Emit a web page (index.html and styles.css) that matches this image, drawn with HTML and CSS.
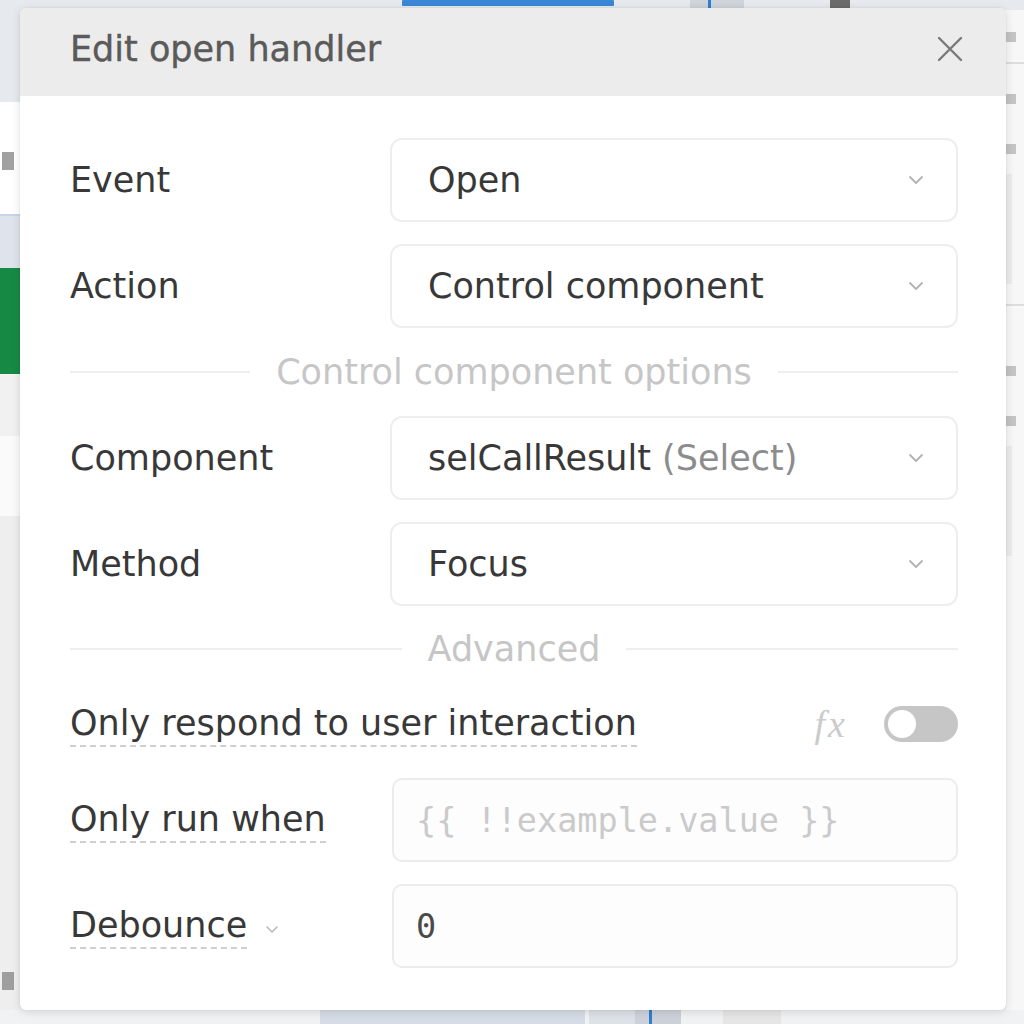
FILE: index.html
```html
<!DOCTYPE html>
<html lang="en">
<head>
<meta charset="utf-8">
<title>Edit open handler</title>
<link rel="stylesheet" href="styles.css">
</head>
<body>
<div class="app">
  <div class="topstrip">
    <span class="ts-link"></span>
    <span class="ts-gray"><i></i></span>
    <span class="ts-dark"></span>
  </div>
  <div class="middle">
    <div class="leftstrip">
      <div class="ls-a"></div>
      <div class="ls-b"><span class="frag"></span></div>
      <div class="ls-c"></div>
      <div class="ls-green"></div>
      <div class="ls-d"></div>
      <div class="ls-e"></div>
      <div class="ls-f"><span class="frag frag-low"></span></div>
    </div>
    <div class="center"></div>
    <div class="rightstrip">
      <span class="rs-mark m1"></span>
      <span class="rs-line"></span>
      <span class="rs-mark m2"></span>
      <span class="rs-mark m3"></span>
      <span class="rs-box"></span>
      <span class="rs-line"></span>
      <span class="rs-mark m4"></span>
      <span class="rs-mark m5"></span>
      <span class="rs-box"></span>
    </div>
  </div>
  <div class="bottomstrip">
    <span class="bs-a"></span>
    <span class="bs-b"></span>
    <span class="bs-c"><i></i></span>
    <span class="bs-d"></span>
  </div>
</div>

<div class="modal">
  <div class="modal-header">
    <h1 class="modal-title">Edit open handler</h1>
    <svg class="close" width="28" height="28" viewBox="0 0 28 28" aria-hidden="true">
      <path d="M3 3 L25 25 M25 3 L3 25" stroke="#7a7a7a" stroke-width="2.4" stroke-linecap="round" fill="none"/>
    </svg>
  </div>
  <div class="modal-body">
    <div class="row">
      <div class="label">Event</div>
      <div class="select"><span class="value">Open</span><svg class="chev" width="16" height="10" viewBox="0 0 16 10"><path d="M2 2 L8 8 L14 2" stroke="#b3b3b3" stroke-width="1.8" fill="none" stroke-linecap="round" stroke-linejoin="round"/></svg></div>
    </div>
    <div class="row">
      <div class="label">Action</div>
      <div class="select"><span class="value">Control component</span><svg class="chev" width="16" height="10" viewBox="0 0 16 10"><path d="M2 2 L8 8 L14 2" stroke="#b3b3b3" stroke-width="1.8" fill="none" stroke-linecap="round" stroke-linejoin="round"/></svg></div>
    </div>
    <div class="divider divider-options"><span>Control component options</span></div>
    <div class="row">
      <div class="label">Component</div>
      <div class="select"><span class="value">selCallResult <span class="muted">(Select)</span></span><svg class="chev" width="16" height="10" viewBox="0 0 16 10"><path d="M2 2 L8 8 L14 2" stroke="#b3b3b3" stroke-width="1.8" fill="none" stroke-linecap="round" stroke-linejoin="round"/></svg></div>
    </div>
    <div class="row">
      <div class="label">Method</div>
      <div class="select"><span class="value">Focus</span><svg class="chev" width="16" height="10" viewBox="0 0 16 10"><path d="M2 2 L8 8 L14 2" stroke="#b3b3b3" stroke-width="1.8" fill="none" stroke-linecap="round" stroke-linejoin="round"/></svg></div>
    </div>
    <div class="divider divider-advanced"><span>Advanced</span></div>
    <div class="toggle-row">
      <div class="label"><span class="dashed">Only respond to user interaction</span></div>
      <div class="toggle-ctrl">
        <span class="fx">fx</span>
        <span class="switch"><span class="knob"></span></span>
      </div>
    </div>
    <div class="row row-input">
      <div class="label"><span class="dashed">Only run when</span></div>
      <div class="input"><span class="mono placeholder">{{ !!example.value }}</span></div>
    </div>
    <div class="row row-input">
      <div class="label"><span class="dashed">Debounce</span><svg class="chev-small" width="14" height="9" viewBox="0 0 14 9"><path d="M2 2 L7 7 L12 2" stroke="#b8b8b8" stroke-width="1.6" fill="none" stroke-linecap="round" stroke-linejoin="round"/></svg></div>
      <div class="input"><span class="mono">0</span></div>
    </div>
  </div>
</div>
</body>
</html>
```
FILE: styles.css
```css
* { box-sizing: border-box; }
html, body { margin: 0; padding: 0; }
body {
  width: 1024px;
  height: 1024px;
  overflow: hidden;
  position: relative;
  font-family: "DejaVu Sans", Inter, sans-serif;
  background: #f4f5f7;
}

/* ---------- background app ---------- */
.app {
  width: 1024px;
  height: 1024px;
  display: flex;
  flex-direction: column;
}
.topstrip {
  height: 10px;
  display: flex;
  align-items: flex-start;
  background: #e6e9ee;
  flex: none;
}
.ts-link { margin-left: 402px; width: 212px; height: 6px; background: #3b86d6; border-radius: 1px; }
.ts-gray { margin-left: 76px; width: 54px; height: 8px; background: #cfd3da; position: relative; }
.ts-gray i { position: absolute; left: 18px; top: 0; width: 3px; height: 8px; background: #2f7fd0; }
.ts-dark { margin-left: 86px; width: 20px; height: 8px; background: #6b6b6b; }

.middle { flex: 1; display: flex; }
.leftstrip { width: 22px; display: flex; flex-direction: column; }
.ls-a { height: 92px; background: #e6e9ee; }
.ls-b { height: 114px; background: #ffffff; border-bottom: 2px solid #c7d6ec; position: relative; }
.frag { position: absolute; left: 2px; top: 50px; width: 12px; height: 18px; background: #8a8a8a; opacity: .8; }
.frag-low { top: auto; bottom: 20px; }
.ls-c { height: 52px; background: #dfe4ec; }
.ls-green { height: 106px; background: #168a44; }
.ls-d { height: 62px; background: #f1f1f1; }
.ls-e { height: 80px; background: #fafafa; }
.ls-f { flex: 1; background: #eeeeee; position: relative; }
.center { flex: 1; background: #eef0f3; }
.rightstrip {
  width: 18px;
  background: #f7f7f7;
  display: flex;
  flex-direction: column;
  align-items: flex-start;
  padding-top: 22px;
  gap: 20px;
}
.rs-mark { width: 10px; height: 10px; background: #c4c4c4; }
.rs-line { width: 18px; height: 2px; background: #dddddd; }
.rs-box { width: 6px; height: 110px; background: #ececec; }
.m2 { margin-top: 10px; }
.m3 { margin-top: 20px; }
.m4 { margin-top: 40px; }
.m5 { margin-top: 20px; }

.bottomstrip {
  height: 14px;
  display: flex;
  background: #f1f2f4;
  flex: none;
}
.bs-a { margin-left: 320px; width: 265px; background: #d6dce6; }
.bs-b { margin-left: 4px; width: 46px; background: #dde1e8; }
.bs-c { width: 46px; background: #cdd2da; position: relative; }
.bs-c i { position: absolute; left: 14px; top: 0; width: 3px; height: 14px; background: #2f7fd0; }
.bs-d { margin-left: 42px; width: 58px; background: #e6e6e6; }

/* ---------- modal ---------- */
.modal {
  position: absolute;
  left: 20px;
  top: 8px;
  width: 986px;
  height: 1002px;
  background: #ffffff;
  border-radius: 6px;
  box-shadow: 0 2px 10px rgba(0,0,0,.12), 0 0 2px rgba(0,0,0,.08);
  overflow: hidden;
  display: flex;
  flex-direction: column;
}
.modal-header {
  height: 88px;
  background: #ececec;
  display: flex;
  align-items: center;
  justify-content: space-between;
  padding: 0 42px 6px 50px;
  flex: none;
}
.modal-title {
  margin: 0;
  font-size: 35px;
  font-weight: 400;
  color: #5a5a5a;
  -webkit-text-stroke: 0.4px #5a5a5a;
  line-height: 1;
}
.close { display: block; }

.modal-body {
  padding: 42px 48px 42px 50px;
  display: flex;
  flex-direction: column;
}
.row {
  display: grid;
  grid-template-columns: 320px 1fr;
  align-items: center;
  height: 84px;
  margin-bottom: 22px;
}
.row:last-child { margin-bottom: 0; }
.label {
  font-size: 35px;
  color: #383838;
  display: flex;
  align-items: center;
  white-space: nowrap;
  line-height: 1.2;
}
.dashed {
  padding-bottom: 1px;
  border-bottom: 2px dashed #cfcfcf;
}
.chev-small { margin-left: 18px; margin-top: 6px; }
.select {
  height: 84px;
  border: 2px solid #eeeeee;
  border-radius: 12px;
  display: flex;
  align-items: center;
  justify-content: space-between;
  padding: 0 32px 0 36px;
  font-size: 35px;
  color: #383838;
}
.muted { color: #8c8c8c; }
.chev { display: block; }

.divider {
  height: 88px;
  margin-top: -22px;
  display: flex;
  align-items: center;
  gap: 26px;
  font-size: 35px;
  color: #c6c6c6;
}
.divider::before, .divider::after {
  content: "";
  flex: 1;
  height: 2px;
  background: #efefef;
}
.divider-advanced { height: 86px; }

.toggle-row {
  height: 64px;
  display: flex;
  align-items: center;
  justify-content: space-between;
  margin-bottom: 22px;
}
.toggle-ctrl { display: flex; align-items: center; gap: 36px; }
.fx {
  font-family: "Liberation Serif", serif;
  font-style: italic;
  font-size: 38px;
  color: #cbcbcb;
  letter-spacing: 3px;
}
.switch {
  width: 74px;
  height: 36px;
  border-radius: 18px;
  background: #c6c6c6;
  padding: 4px;
  display: flex;
  align-items: center;
}
.knob {
  width: 28px;
  height: 28px;
  border-radius: 50%;
  background: #ffffff;
}

.row-input .input {
  height: 84px;
  margin-left: 2px;
  border: 2px solid #ececec;
  border-radius: 10px;
  background: #fdfdfd;
  display: flex;
  align-items: center;
  padding: 0 22px;
}
.mono {
  font-family: "DejaVu Sans Mono", "Liberation Mono", monospace;
  font-size: 33.5px;
  color: #4a4a4a;
}
.placeholder { color: #cacaca; }
```
